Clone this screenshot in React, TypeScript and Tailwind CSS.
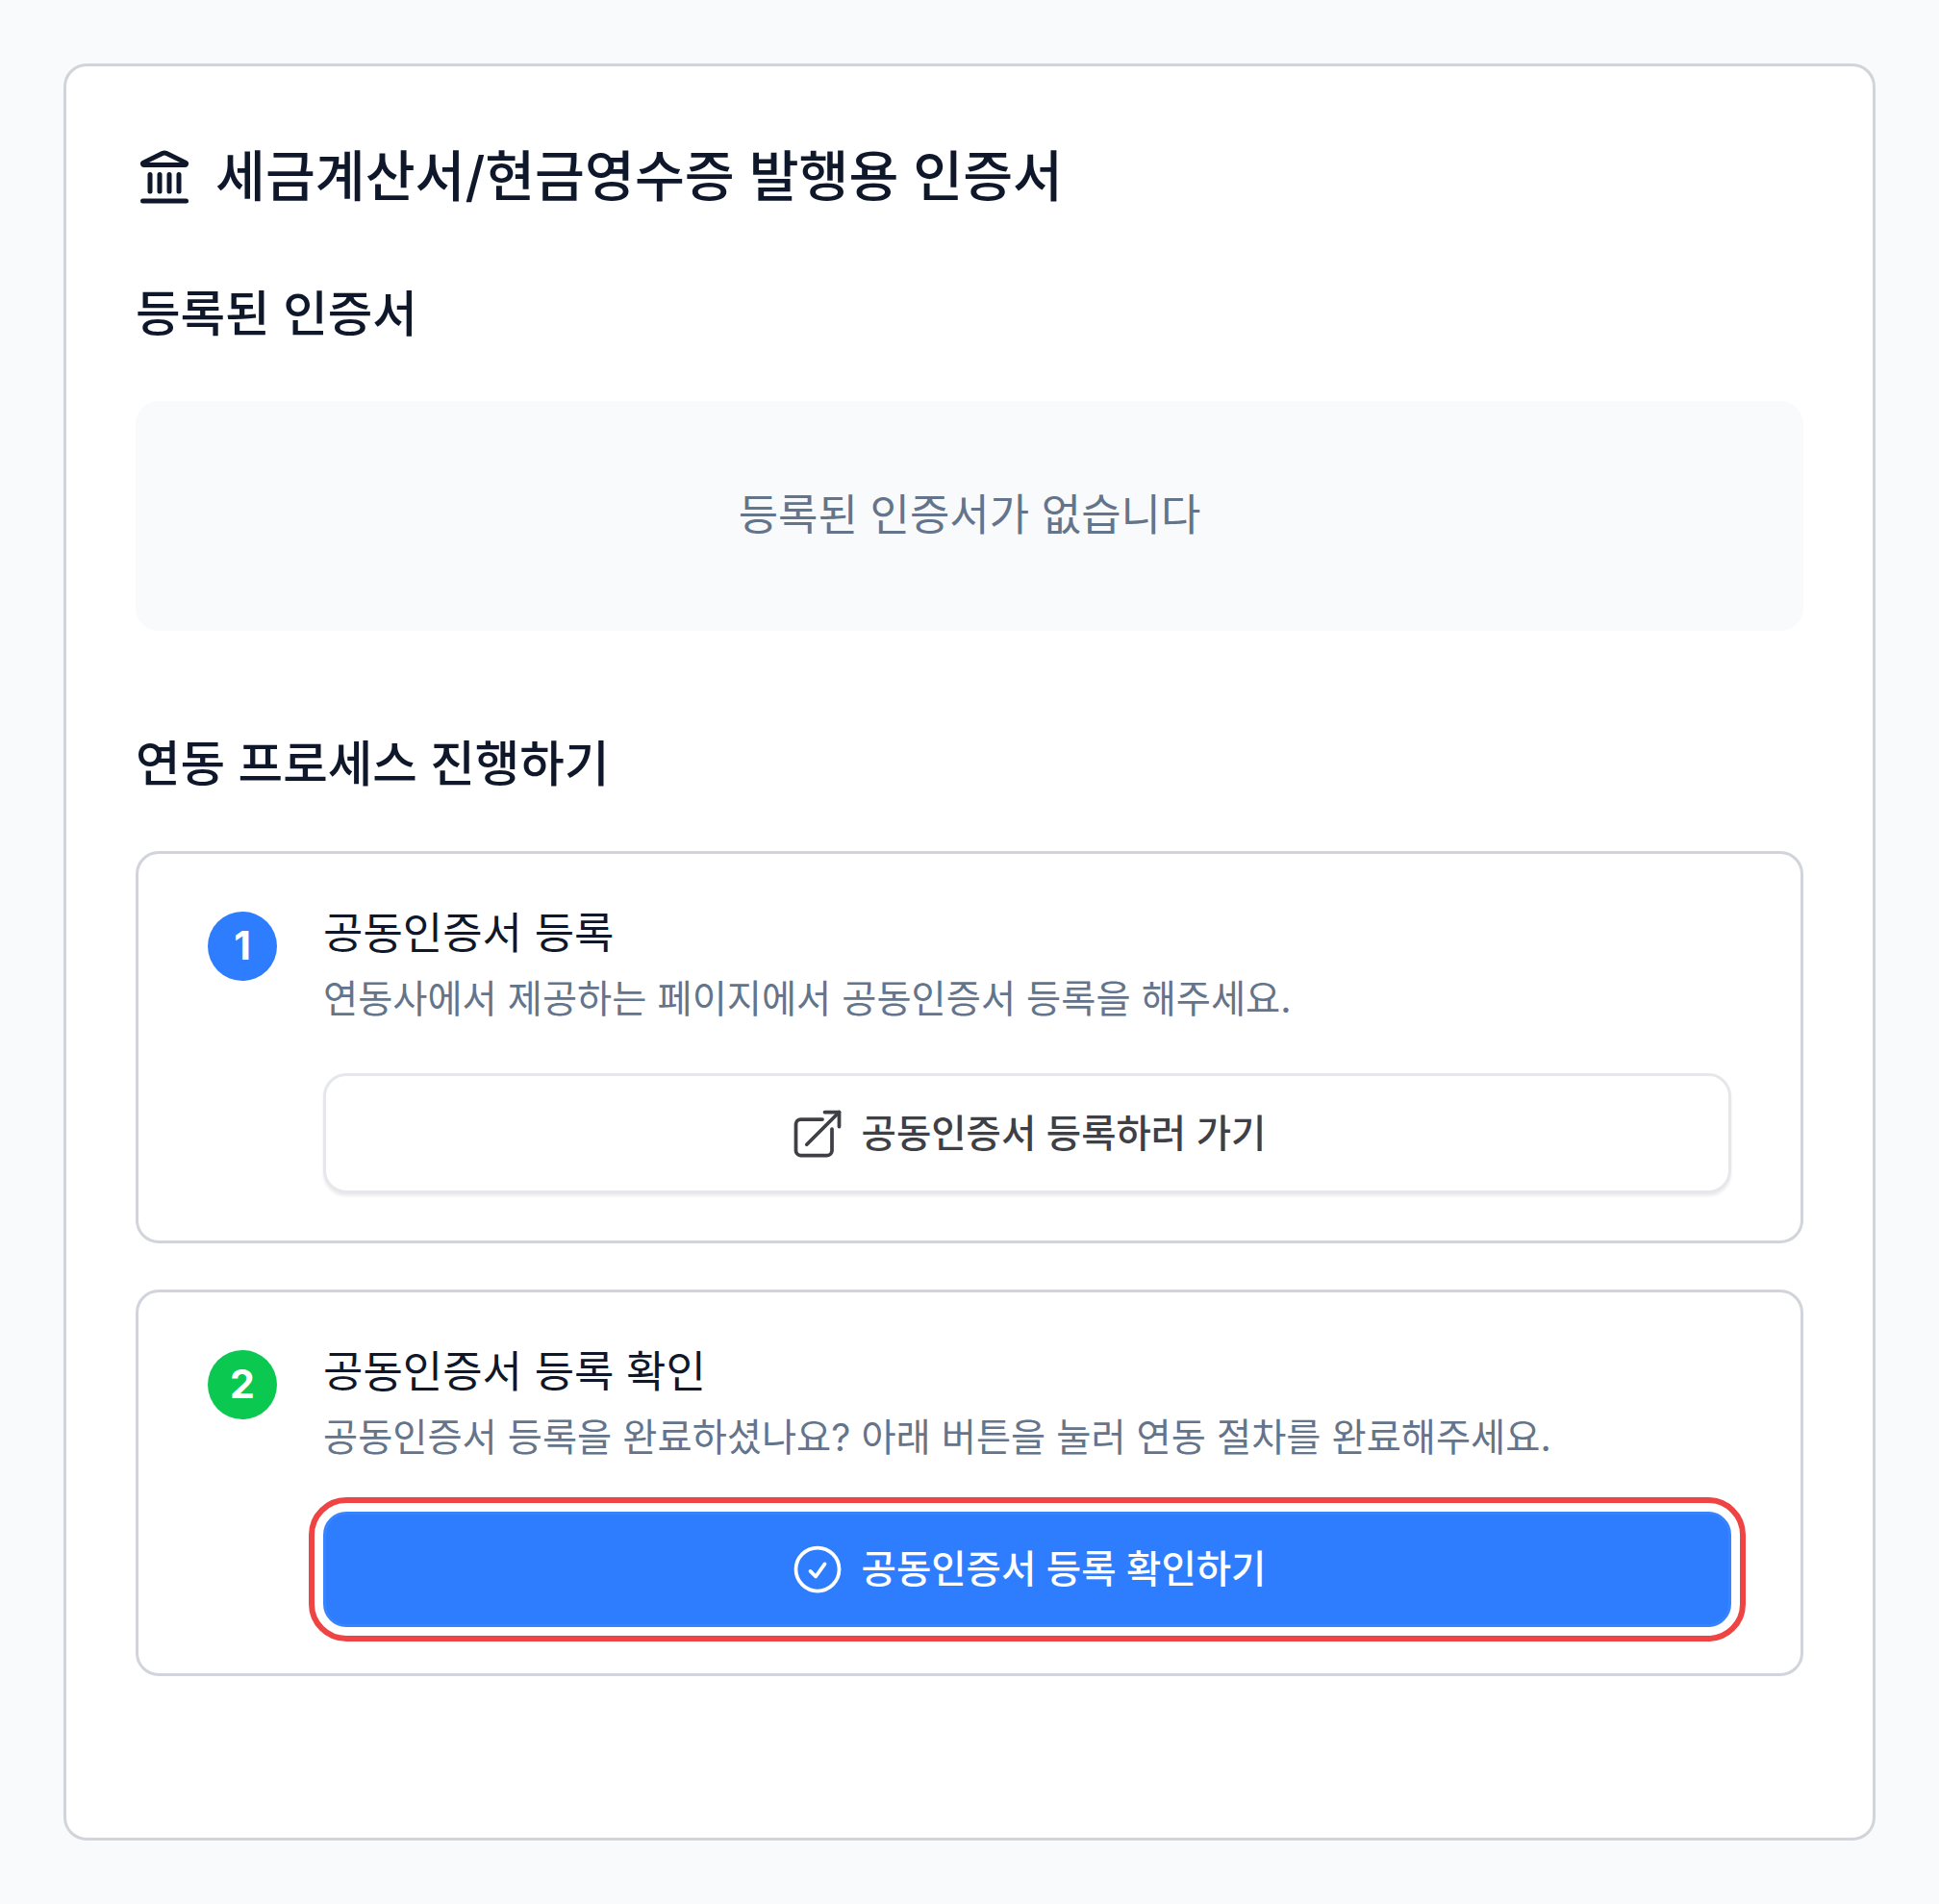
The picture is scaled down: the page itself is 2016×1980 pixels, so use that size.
import React from 'react';
import { Landmark } from 'lucide-react';
import { HiOutlineCheckCircle } from 'react-icons/hi2';

const font = 'font-["Inter","Noto_Sans_CJK_KR",sans-serif]';

const StepBadge = ({ n, color }: { n: number; color: string }) => (
  <div
    className={`mt-[5px] flex h-[72px] w-[72px] shrink-0 items-center justify-center rounded-full text-[41px] font-bold text-white ${color}`}
  >
    {n}
  </div>
);

const OpenIcon = () => (
  <svg
    viewBox="0 0 24 24"
    fill="none"
    stroke="currentColor"
    strokeWidth={1.5}
    strokeLinecap="round"
    strokeLinejoin="round"
    className="h-[60px] w-[60px]"
  >
    <path d="M18 10v9a2 2 0 0 1-2 2H5a2 2 0 0 1-2-2V8a2 2 0 0 1 2-2h9" />
    <path d="M15 3h6v6" />
    <path d="M7.5 16.5 21 3" />
  </svg>
);

export default function App() {
  return (
    <div className={`min-h-[1980px] bg-[#f9fafb] p-[66px] ${font}`}>
      <div className="h-[1848px] rounded-[24px] border-[3px] border-[#d1d5db] bg-white px-[72px] pt-[73px]">
        <h1 className="flex items-center gap-[23px] text-[56.4px] font-medium leading-[84px] text-[#0f172a]">
          <Landmark className="h-[60px] w-[60px]" strokeWidth={2} />
          세금계산서/현금영수증 발행용 인증서
        </h1>

        <h2 className="mt-[65px] text-[50.6px] font-medium leading-[72px] text-[#0f172a]">
          등록된 인증서
        </h2>
        <div className="mt-[54px] flex h-[239px] items-center justify-center rounded-[24px] bg-[#f9fafb] pb-[2px] text-[45px] text-[#64748b]">
          등록된 인증서가 없습니다
        </div>

        <h2 className="mt-[103px] text-[50.6px] font-medium leading-[72px] text-[#0f172a]">
          연동 프로세스 진행하기
        </h2>

        <div className="mt-[54px] flex h-[408px] gap-[48px] rounded-[24px] border-[3px] border-[#d1d5db] px-[72px] pt-[55px]">
          <StepBadge n={1} color="bg-[#2e7dff]" />
          <div className="flex-1">
            <h3 className="text-[45px] leading-[56px] text-[#0f172a]">공동인증서 등록</h3>
            <p className="mt-[12px] text-[39.3px] leading-[56px] text-[#64748b]">
              연동사에서 제공하는 페이지에서 공동인증서 등록을 해주세요.
            </p>
            <button
              type="button"
              className="mt-[49px] flex h-[125px] w-full items-center justify-center gap-[16px] rounded-[24px] border-[3px] border-[#e5e7eb] bg-white text-[39.5px] font-medium text-[#3f3f46] shadow-[0_3px_3px_rgba(0,0,0,0.08)]"
            >
              <OpenIcon />
              <span className="pt-[2px]">공동인증서 등록하러 가기</span>
            </button>
          </div>
        </div>

        <div className="mt-[48px] flex h-[402px] gap-[48px] rounded-[24px] border-[3px] border-[#d1d5db] px-[72px] pt-[55px]">
          <StepBadge n={2} color="bg-[#0ac850]" />
          <div className="flex-1">
            <h3 className="text-[45px] leading-[56px] text-[#0f172a]">공동인증서 등록 확인</h3>
            <p className="mt-[12px] text-[39.3px] leading-[56px] text-[#64748b]">
              공동인증서 등록을 완료하셨나요? 아래 버튼을 눌러 연동 절차를 완료해주세요.
            </p>
            <button
              type="button"
              className="mt-[49px] flex h-[120px] w-full items-center justify-center gap-[16px] rounded-[24px] border-[3px] border-[#3884ff] bg-[#2e7dff] text-[39.5px] font-medium text-white outline-[6px] outline-offset-[9px] outline-[#ef4444]"
            >
              <HiOutlineCheckCircle className="h-[60px] w-[60px]" />
              <span className="pt-[2px]">공동인증서 등록 확인하기</span>
            </button>
          </div>
        </div>
      </div>
    </div>
  );
}
